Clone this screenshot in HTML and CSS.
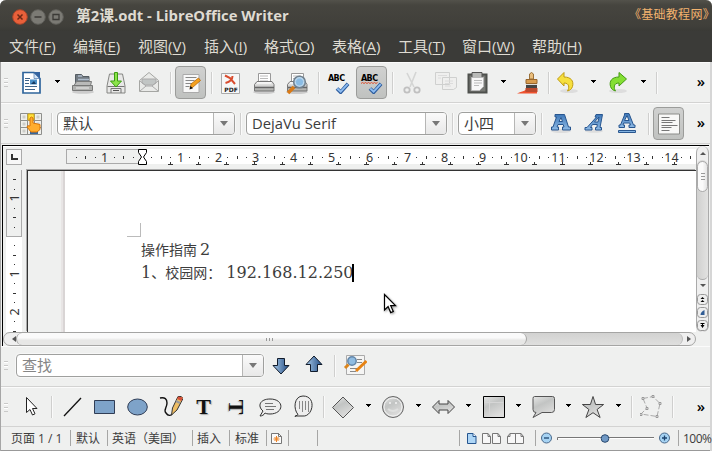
FILE: index.html
```html
<!DOCTYPE html>
<html lang="zh-CN">
<head>
<meta charset="utf-8">
<title>第2课.odt - LibreOffice Writer</title>
<link rel="stylesheet" href="styles.css">
</head>
<body>
<svg class="defs" width="0" height="0">
  <defs>
    <linearGradient id="gGrey" x1="0" y1="0" x2="0" y2="1"><stop offset="0" stop-color="#f4f4f4"/><stop offset="1" stop-color="#a8a9a6"/></linearGradient>
    <linearGradient id="gShape" x1="0" y1="0" x2=".5" y2="1"><stop offset="0" stop-color="#e6e7e6"/><stop offset=".45" stop-color="#c2c4c3"/><stop offset="1" stop-color="#dededd"/></linearGradient>
    <linearGradient id="gBlue" x1="0" y1="0" x2="1" y2="0"><stop offset="0" stop-color="#a9cbea"/><stop offset="1" stop-color="#214b83"/></linearGradient>
    <linearGradient id="gLetter" x1="0" y1="0" x2="0" y2="1"><stop offset="0" stop-color="#3e78b8"/><stop offset="1" stop-color="#8fbbe6"/></linearGradient>
    <symbol id="caret" viewBox="0 0 7 4"><path d="M1 0h5v1h-1v1h-1v1h-1v-1h-1v-1h-1z" fill="#000"/></symbol>
    <symbol id="cursor" viewBox="0 0 14 22"><path d="M1.500 1.500v15.500l3.600-3.400 2.600 6 2.600-1.100-2.600-5.800h4.800z" fill="#fff" stroke="#000" stroke-width="1.200"/></symbol>
    <symbol id="printer" viewBox="0 0 24 24"><ellipse cx="12" cy="21" rx="11" ry="2" fill="#ccc"/><path d="M6.500 12V2.500h12V12z" fill="#fff" stroke="#999"/><path d="M8 5h8M8 7.500h8M8 10h8" stroke="#bbb"/><path d="M5 10.500h15l2 3v6.500H2.500v-6.500z" fill="url(#gGrey)" stroke="#777"/><path d="M5 12h14" stroke="#fff"/><path d="M3 16.500h19" stroke="#666" stroke-width="1.500"/></symbol>
    <symbol id="check" viewBox="0 0 16 13"><path d="M2 7l4 4 8-9" fill="none" stroke="#2c5c9e" stroke-width="4"/><path d="M2.300 7l3.700 3.500 7.600-8.300" fill="none" stroke="#8ebcf0" stroke-width="2"/></symbol>
  </defs>
</svg>

<div class="window">
  <header class="titlebar">
    <div class="controls">
      <svg width="16" height="16" viewBox="0 0 16 16"><circle cx="8" cy="8" r="7.300" fill="#e9603a" stroke="#a6452b"/><path d="M5.500 5.500l5 5m0-5l-5 5" stroke="#6b2815" stroke-width="1.500"/></svg>
      <svg width="16" height="16" viewBox="0 0 16 16"><circle cx="8" cy="8" r="7.300" fill="#7b7a74" stroke="#5f5e59"/><path d="M4.500 8h7" stroke="#3b3a36" stroke-width="1.600"/></svg>
      <svg width="16" height="16" viewBox="0 0 16 16"><circle cx="8" cy="8" r="7.300" fill="#7b7a74" stroke="#5f5e59"/><path d="M5 5.500h6v5H5z" fill="none" stroke="#3b3a36" stroke-width="1.300"/></svg>
    </div>
    <h1 class="title">第2课.odt - LibreOffice Writer</h1>
    <span class="brand">《基础教程网》</span>
  </header>

  <nav class="menubar">
    <span class="m1">文件(<u>F</u>)</span><span class="m2">编辑(<u>E</u>)</span><span class="m3">视图(<u>V</u>)</span><span class="m4">插入(<u>I</u>)</span><span class="m5">格式(<u>O</u>)</span><span class="m6">表格(<u>A</u>)</span><span class="m7">工具(<u>T</u>)</span><span class="m8">窗口(<u>W</u>)</span><span class="m9">帮助(<u>H</u>)</span>
  </nav>

  <div class="toolbar">
    <i class="grip"></i>
    <span class="tool"><svg viewBox="0 0 24 24"><path d="M4 1.500h11l6 6V22H4z" fill="#fff" stroke="#2f659c" stroke-width="1.700"/><path d="M15 1l6 6.500V1z" fill="#3564a0"/><path d="M15 2v5.500h5.500z" fill="#d5e5f5" stroke="#3564a0" stroke-width=".6"/><path d="M6 7.500h5M6 9.500h4M6 12.500h4M6 15.500h12M6 18.500h10" stroke="#3e648a"/><path d="M11 8.500h7v5h-7z" fill="#4a90c8"/><path d="M12 13l3-3 2 3z" fill="#173b62"/></svg></span>
    <span class="drop wide"><svg><use href="#caret"/></svg></span>
    <span class="tool"><svg viewBox="1 0 24 24"><ellipse cx="12" cy="21" rx="11" ry="1.800" fill="#ccc"/><path d="M4.500 14V3.500h6l1.500 2h6V14z" fill="#727b83" stroke="#555d63"/><path d="M7 5h4M7 8.500h11" stroke="#aebccb" stroke-width="1.500"/><path d="M5.500 10.500h15l-1 4H3z" fill="#b9bab9" stroke="#7b7c7b"/><path d="M1.500 14.500h20v5h-20z" fill="#b0b1af" stroke="#777877"/><path d="M5 17h13" stroke="#eee"/></svg></span>
    <span class="tool"><svg viewBox="1 0 24 24"><path d="M5.500 3h13l2.500 12v7H3v-7z" fill="#e8e8e7" stroke="#858683"/><path d="M3.500 15.500h17M7 22v-4.500h10V22" fill="none" stroke="#777"/><path d="M9 19.500h6" stroke="#555"/><path d="M10.500 1.500h3V10h4L12 16 6.500 10h4z" fill="#8be34a" stroke="#3c9c12"/></svg></span>
    <span class="tool"><svg viewBox="1 0 24 24"><path d="M2.500 9.500L12 1.500l9.500 8v11h-19z" fill="#e9eae8" stroke="#a5a6a3"/><path d="M5 8h14v4l-3.500 2h-7L5 12z" fill="#c1c5c4" stroke="#aaa"/><path d="M3 10l6 5h6l6-5M3 20l6-5m6 0l6 5" fill="none" stroke="#aaa"/></svg></span>
    <i class="sep"></i>
    <span class="tool"><b class="pressed"><svg viewBox="0 0 24 24"><path d="M4 3.500h16v18H4z" fill="#f8f8f8" stroke="#aaa"/><path d="M6.500 6.500h11M6.500 9.500h9M6.500 12.500h7M6.500 15.500h4" stroke="#888"/><path d="M11 17.500l1-4.500 7.500-6 2 2.500-8 7z" fill="#f5a11e" stroke="#b66a0a" stroke-width=".8"/><path d="M10.500 18.500l1-3.500 2.500 2.300z" fill="#111"/></svg></b></span>
    <i class="sep"></i>
    <span class="tool"><svg viewBox="1 0 24 24"><path d="M2.500 2.500h18v20h-18z" fill="#f7f7f7" stroke="#aaa"/><path d="M6 4.500l5 2.500 5 6M13.500 5c0 4-3 6-7 7" fill="none" stroke="#d94d2f" stroke-width="2"/><text x="12" y="21" class="pdf">PDF</text></svg></span>
    <span class="tool"><svg viewBox="1 0 24 24"><use href="#printer" width="24" height="24"/></svg></span>
    <span class="tool"><svg viewBox="1 0 24 24"><use href="#printer" width="24" height="24"/><path d="M9 16l-6 6" stroke="#d97a16" stroke-width="3.500"/><circle cx="14.500" cy="11" r="5.800" fill="#b6d7f0" fill-opacity=".92" stroke="#71818e" stroke-width="1.600"/><circle cx="14.500" cy="11" r="3.500" fill="#8abce4"/></svg></span>
    <i class="sep"></i>
    <span class="tool"><svg viewBox="0 0 24 24"><text x="1" y="10" class="abc" textLength="17">ABC</text><use href="#check" x="8" y="11" width="15" height="12"/></svg></span>
    <span class="tool"><b class="pressed"><svg viewBox="0 0 24 24"><text x="1" y="10" class="abc" textLength="17">ABC</text><path d="M1 12.500l1.500-1 1.500 1 1.500-1 1.500 1 1.500-1 1.500 1 1.500-1 1.500 1 1.500-1 1.500 1 1.500-1" fill="none" stroke="#e05030"/><use href="#check" x="8" y="11" width="15" height="12"/></svg></b></span>
    <i class="sep"></i>
    <span class="tool"><svg viewBox="1 0 24 24"><path d="M7 2l7 14M16 1l-6 15" stroke="#d4d5d4" stroke-width="1.600" fill="none"/><circle cx="7" cy="19" r="2.700" fill="none" stroke="#c0c0c0" stroke-width="1.800"/><circle cx="17" cy="19" r="2.700" fill="none" stroke="#c0c0c0" stroke-width="1.800"/></svg></span>
    <span class="tool"><svg viewBox="0 0 24 24"><path d="M1.500 1.500h14v12h-14zM8.500 6.500h14v10l-3 2h-11z" fill="#efefee" stroke="#cfd0cf"/><path d="M4 4.500h9M4 7h3M11 10h8M11 12.500h8M11 15h6" stroke="#dcdcdc"/></svg></span>
    <span class="tool"><svg viewBox="1 0 24 24"><path d="M2.500 3.500h18v18h-18z" fill="#777975" stroke="#4e504d" stroke-width="2"/><path d="M6 1.500h10v5H6z" fill="#b9bab8" stroke="#555"/><path d="M5.500 6.500h12v9l-4 4h-8z" fill="#f8f8f8" stroke="#bbb"/><path d="M8 9.500h8M8 12h8M8 14.500h5" stroke="#bbb"/></svg></span>
    <span class="drop narrow"><svg><use href="#caret"/></svg></span>
    <span class="tool"><svg viewBox="0 0 24 24"><path d="M1 22.500c4-2 7-2 9-4h11v4z" fill="#f0522f"/><path d="M13.500 8V3q2-3 4 0v5z" fill="#e9bd7b" stroke="#9b713b"/><path d="M10 8.500h11v4H10z" fill="#d99d50" stroke="#98662c"/><path d="M10 13h11v4.500H10z" fill="#444"/><path d="M10 13.500h11" stroke="#ddd"/><path d="M9.500 17h12v4h-12z" fill="#bd4a2e"/></svg></span>
    <i class="sep"></i>
    <span class="tool"><svg viewBox="1 0 24 24"><ellipse cx="13" cy="20" rx="9" ry="2" fill="#ddd"/><path d="M1.500 8L8 1.500V6c7 0 10 4 8.500 9.500-.8 2.500-2.500 3.800-5 4.500 2-3 2-8-3.500-8v3z" fill="#f6df3e" stroke="#bf9b10"/></svg></span>
    <span class="drop"><svg><use href="#caret"/></svg></span>
    <span class="tool"><svg viewBox="1 0 24 24"><ellipse cx="12" cy="20" rx="9" ry="2" fill="#ddd"/><path d="M20.500 8L13 1.500V6C6 6 3 10 4.500 15.500c.8 2.500 2.500 3.800 5 4.500-2-3-2-8 3.500-8v3z" fill="#84df33" stroke="#439a12"/></svg></span>
    <span class="drop"><svg><use href="#caret"/></svg></span>
    <i class="sep"></i>
    <span class="more">»</span>
  </div>

  <div class="toolbar">
    <i class="grip"></i>
    <span class="tool"><svg viewBox="0 0 24 24"><path d="M1.500 1.500h21v21h-21zM8.500 1.500v21M15.500 1.500v21M1.500 8.500h21M1.500 15.500h21" fill="#efefeb" stroke="#8e8f8c"/><path d="M3.500 3.500h3v3h-3zM17.500 3.500h3v3h-3zM3.500 10.500h3v3h-3zM3.500 17.500h3v3h-3zM17.500 10.500h3v3h-3z" fill="#cdcec9"/><path d="M9 2h6v6H9z" fill="#ffe23c" stroke="#d9ae13"/><path d="M11 19h8v3h-8z" fill="#35669f"/><path d="M11 6q1.500-2 3 0v5l7 1.500v5l-3 2.500h-6l-4-5q0-2 3-1z" fill="#ffad2e" stroke="#d97505"/></svg></span>
    <i class="sep"></i>
    <div class="combo style-name"><span>默认</span><b><i></i></b></div>
    <i class="sep"></i>
    <div class="combo font-name"><span>DejaVu Serif</span><b><i></i></b></div>
    <i class="sep"></i>
    <div class="combo font-size"><span>小四</span><b><i></i></b></div>
    <i class="sep"></i>
    <span class="tool"><svg viewBox="1 1 24 24"><ellipse cx="12" cy="20" rx="10" ry="2" fill="#ddd"/><path fill-rule="evenodd" d="M8 3.500h7.500l4 12.500H21.500v3h-8v-3H15l-.8-2.500H9L8 16h1.500v3h-7v-3H4L7.500 6H6V3.500zM10 10.500h3.500L12 6.500z" fill="url(#gLetter)" stroke="#28568f"/></svg></span>
    <span class="tool"><svg viewBox="0 1 24 24"><ellipse cx="11" cy="20" rx="9" ry="1.800" fill="#ddd"/><path fill-rule="evenodd" d="M13 3.500h6.500L17 16.500h1.500V19h-6v-2.500h1.300l.5-3H9.500L7.500 16.500H9V19H2v-2.500h2L13.500 6H12zM11.500 11H15l1-5z" fill="url(#gLetter)" stroke="#28568f"/></svg></span>
    <span class="tool"><svg viewBox="1 0 24 24"><path fill-rule="evenodd" d="M9.500 1.500H14L18.500 13H20v2.500h-6V13h1.500l-.8-2H8.500L8 13h1.500v2.500H4V13h1.500L9.500 3zM9.500 8.500H14L12 3.500z" fill="url(#gLetter)" stroke="#28568f"/><path d="M3.500 18.500h17v2h-17z" fill="#83b3e1" stroke="#28568f"/></svg></span>
    <i class="sep"></i>
    <span class="tool"><b class="pressed"><svg viewBox="0 0 24 24"><path d="M1.500 2h21v20h-21z" fill="#f8f8f7" stroke="#8b8c89"/><path d="M4.500 5.500h8M4.500 8.500h14M4.500 10.500h11M4.500 13.500h16M4.500 15.500h10M4.500 18.500h8" stroke="#777"/></svg></b></span>
    <span class="more">»</span>
  </div>

  <main class="editor">
    <div class="workspace">
      <div class="ruler-row">
        <span class="tab-kind"><i></i></span>
        <svg class="hruler" id="hruler" width="630" height="18"></svg>
      </div>
      <div class="page-row">
        <svg class="vruler" id="vruler" width="16" height="162"></svg>
        <div class="canvas">
          <article class="page">
            <i class="crop"></i>
            <p><span class="han">操作指南</span> 2</p>
            <p>1<span class="han">、校园网：</span> 192.168.12.250<i class="text-caret"></i></p>
          </article>
        </div>
      </div>
      <div class="hscroll"><b class="left"></b><div class="track"><span class="thumb"><i></i></span></div><b class="right"></b></div>
    </div>
    <div class="vscroll">
      <b class="up"></b>
      <div class="track"><span class="thumb"><i></i></span></div>
      <b class="down"></b>
      <svg width="11" height="12" viewBox="0 0 11 12"><rect x=".5" y=".5" width="10" height="10" rx="3" class="nav"/><path d="M3.500 5l2-2 2 2zM3.500 8l2-2 2 2z"/></svg>
      <svg width="11" height="12" viewBox="0 0 11 12"><rect x=".5" y=".5" width="10" height="10" rx="3" class="nav"/><path d="M3.500 8q0-3 4-5v5z" fill="#315c94"/></svg>
      <svg width="11" height="12" viewBox="0 0 11 12"><rect x=".5" y=".5" width="10" height="10" rx="3" class="nav"/><path d="M3.500 3h4v1H6v1h1.500l-2 3-2-3H5V4H3.500z"/></svg>
    </div>
    <svg class="pointer" width="14" height="22"><use href="#cursor"/></svg>
  </main>

  <div class="toolbar find">
    <i class="grip"></i>
    <div class="combo search"><span>查找</span><b><i></i></b></div>
    <span class="tool"><svg viewBox="0 0 24 24"><path d="M8.500 4.500h7v7h4.500l-8 8.500-8-8.500h4.500z" fill="url(#gBlue)" stroke="#101b2b"/></svg></span>
    <span class="tool"><svg viewBox="0 1 24 24"><path d="M8.500 18.500h7v-7h4.500L12 3l-8 8.500h4.500z" fill="url(#gBlue)" stroke="#101b2b"/></svg></span>
    <i class="sep"></i>
    <span class="tool"><svg viewBox="0 1 24 24"><path d="M3.500 2.500h18v19h-18z" fill="#f5f5f4" stroke="#aaa"/><path d="M14 6.500h5M14 9.500h5M7 15.500h7M7 18.500h6" stroke="#888"/><circle cx="9" cy="8" r="4.200" fill="#8fbce2" stroke="#6386a8" stroke-width="1.500"/><path d="M5.500 11.500L2 15" stroke="#dc851b" stroke-width="3"/><path d="M13 18l10.500-10" stroke="#e68212" stroke-width="3"/></svg></span>
  </div>

  <div class="toolbar drawing">
    <i class="grip"></i>
    <span class="tool"><svg viewBox="1 1 24 24"><path d="M8.500 3.500v15l3.500-3 2.500 5.500 2.500-1.200-2.500-5.300h4.500z" fill="#fff" stroke="#222"/></svg></span>
    <i class="sep"></i>
    <span class="tool"><svg viewBox="0 0 24 24"><path d="M4 21L21 3" stroke="#111" stroke-width="1.300"/></svg></span>
    <span class="tool"><svg viewBox="1 0 24 24"><path d="M2.500 5.500h20v13h-20z" fill="#7ea3c9" stroke="#303d55"/></svg></span>
    <span class="tool"><svg viewBox="1 0 24 24"><ellipse cx="12.500" cy="12" rx="9.800" ry="8" fill="#7ea3c9" stroke="#303d55"/></svg></span>
    <span class="tool"><svg viewBox="0 0 24 24"><path d="M1 3c5-1 7 1 7 5 0 5-4 7-1 10 2 3 5 3 6 1" fill="none" stroke="#111" stroke-width="1.400"/><path d="M12.500 20l1-7L19 1.500q4-1 5 2L18 15z" fill="#eebe64" stroke="#333"/><path d="M18 4l4.500 2 1.300-3.500-4.600-1z" fill="#d5513a"/><path d="M17 6l4 2" stroke="#999" stroke-width="2"/></svg></span>
    <span class="tool glyph">T</span>
    <span class="tool glyph"><span class="turned">T</span></span>
    <span class="tool"><svg viewBox="0 0 24 24"><path d="M2 21l3-5C-1 11 2 4 12 4c15 0 14 15 0 15-3 0-4-.5-5-1-1 2-3 3-5 3z" fill="#eee" stroke="#333"/><path d="M7 8.500h8M7 11.500h11M8 14.500h8" stroke="#777"/></svg></span>
    <span class="tool"><svg viewBox="0 0 24 24"><path d="M4 21.500l3-2C2 14 3 1 12 1c14 0 10 21 0 20H4z" fill="#eee" stroke="#333"/><path d="M8.500 6v8M11.500 6v11M14.500 6v9M17.500 6v11" stroke="#888"/></svg></span>
    <i class="sep"></i>
    <span class="tool"><svg viewBox="1 0 24 24"><path d="M12 2l10.500 10.500L12 23 1.500 12.500z" fill="url(#gShape)" stroke="#555"/></svg></span>
    <span class="drop"><svg><use href="#caret"/></svg></span>
    <span class="tool"><svg viewBox="1 0 24 24"><circle cx="12" cy="12" r="10.500" fill="url(#gShape)" stroke="#666"/><circle cx="12" cy="12" r="9" fill="none" stroke="#f1f1f1"/><path d="M7 14q5 4 10 0" stroke="#dfe0df" stroke-width="2" fill="none"/><path d="M8 8h2M14 8h2" stroke="#e8e8e8" stroke-width="2"/></svg></span>
    <span class="drop"><svg><use href="#caret"/></svg></span>
    <span class="tool"><svg viewBox="1 0 24 24"><path d="M1.500 12L8 5.500V9h9V5.500l6.500 6.500-6.500 6.500V15H8v3.500z" fill="url(#gShape)" stroke="#444"/></svg></span>
    <span class="drop"><svg><use href="#caret"/></svg></span>
    <span class="tool"><svg viewBox="1 0 24 24"><path d="M2.500 1.500h21v21h-21z" fill="url(#gShape)" stroke="#000"/><path d="M3.500 7.500h19M8.500 2.500v19" stroke="#d6d6d6"/></svg></span>
    <span class="drop"><svg><use href="#caret"/></svg></span>
    <span class="tool"><svg viewBox="1 0 24 24"><path d="M3.500 1.500h18q2 0 2 2v11q0 3-3 3H11l-9 5 3-5q-3 0-3-3v-11q0-2 1.500-2z" fill="url(#gShape)" stroke="#555"/></svg></span>
    <span class="drop"><svg><use href="#caret"/></svg></span>
    <span class="tool"><svg viewBox="1 0 24 24"><path d="M12 1.500l2.600 8h8l-6.500 5 3 8L12 17.700l-7.100 4.800 3-8-6.500-5h8z" fill="url(#gShape)" stroke="#444"/></svg></span>
    <span class="drop"><svg><use href="#caret"/></svg></span>
    <i class="sep"></i>
    <span class="tool"><svg viewBox="1 0 24 24"><path d="M4 3.500L14 1.500l7 7-3 13-16-2.500 6-6z" fill="none" stroke="#aaa" stroke-dasharray="5 2"/><path d="M3 2.500h2v2H3zM13 .5h2v2h-2zM20 7.500h2v2h-2zM17 20.500h2v2h-2zM1 18.500h2v2H1zM7 12.500h2v2H7z" fill="#eee" stroke="#999"/></svg></span>
    <i class="sep"></i>
    <span class="more">»</span>
  </div>

  <footer class="status">
    <span class="s-page">页面 1 / 1</span>
    <span class="s-style">默认</span>
    <span class="s-lang">英语（美国）</span>
    <span class="s-mode">插入</span>
    <span class="s-sel">标准</span>
    <span class="s-mod"><svg width="11" height="13" viewBox="0 0 11 13"><path d="M.5 1.500h7l3 3v7H.5z" fill="#fafafa" stroke="#777"/><path d="M7.500 1v3.500h3" fill="none" stroke="#777"/><path d="M5.500 4v6M2.500 7h6M3.500 5l4 4m0-4l-4 4" stroke="#ef8424"/></svg></span>
    <span class="s-sign"></span>
    <span class="s-info"></span>
    <span class="s-view">
      <svg width="10" height="13" viewBox="0 0 10 13"><path d="M.5 1.500H6l3 3v7H.5z" fill="#aed6f6" stroke="#25558f"/><path d="M6 1.500v3h3" fill="#fff" stroke="#25558f"/></svg>
      <svg width="20" height="13" viewBox="0 0 20 13"><path d="M.5 1.500H6l2.500 3v7h-8zM10.500 1.500H16l2.500 3v7h-8z" fill="#f7f7f7" stroke="#777"/><path d="M6 1.500v3h2.500M16 1.500v3h2.500" fill="none" stroke="#777"/></svg>
      <svg width="18" height="13" viewBox="0 0 18 13"><path d="M.5 4.500l2.500-3h5.500v10h-8zM8.500 1.500H14l2.500 3v7h-8z" fill="#f7f7f7" stroke="#777"/><path d="M.5 4.500H3v-3M14 1.500v3h2.500" fill="none" stroke="#777"/></svg>
    </span>
    <span class="s-zoom">
      <svg width="131" height="14" viewBox="0 0 131 14"><path d="M17.500 9V6.500H114" fill="none" stroke="#777"/><path d="M18 7.500h96" stroke="#fff"/><circle cx="6.500" cy="7" r="5" fill="#a6d3f3" stroke="#49698c"/><path d="M4 7h5" stroke="#1d446f" stroke-width="1.300"/><circle cx="65" cy="7.500" r="3.800" fill="#7099c5" stroke="#29496f"/><circle cx="124.500" cy="7" r="5" fill="#a6d3f3" stroke="#49698c"/><path d="M122 7h5m-2.500-2.500v5" stroke="#1d446f" stroke-width="1.300"/></svg>
    </span>
    <span class="s-pct">100%</span>
  </footer>
</div>
<script src="script.js"></script>
</body>
</html>
```

FILE: styles.css
```css
* { box-sizing: border-box; }
body { margin: 0; background: #fff; font-family: "Open Sans", "Noto Sans CJK SC", sans-serif; color: #3c3c3c; }
i { font-style: normal; }
.defs { display: block; position: absolute; }
.window { width: 712px; height: 451px; overflow: hidden; display: flex; flex-direction: column; background: #eff0ef; border-radius: 6px 6px 0 0; box-shadow: inset 1px 0 #a6a6a6, inset -2px 0 #d6d6d6, inset 0 -1px #999; }

.titlebar { height: 31px; flex: none; display: flex; align-items: center; background: linear-gradient(#53524b 0, #46453f 5px, #403f3a 26px, #3a3a36 100%); }
.controls { display: flex; gap: 2px; margin: 2px 0 0 12px; }
.controls svg { display: block; }
.title { margin: 0 0 1px 12px; font-size: 14.800px; line-height: 20px; font-weight: 700; color: #dfdbd2; white-space: nowrap; }
.brand { margin: 0 3px 1px auto; font-size: 12px; font-feature-settings: "halt"; letter-spacing: .3px; line-height: 20px; white-space: nowrap; color: #f3b36e; }

.menubar { height: 31px; flex: none; display: flex; padding-left: 9px; background: #3b3b38; color: #dfdbd2; font-size: 15px; line-height: 31px; white-space: nowrap; }
.menubar u { text-underline-offset: 2px; text-decoration-thickness: 1px; }
.m1 { width: 64px; }
.m2 { width: 65px; }
.m3 { width: 66px; }
.m4 { width: 60px; }
.m5 { width: 68px; }
.m6 { width: 66px; }
.m7 { width: 64px; }
.m8 { width: 70px; }

.toolbar { height: 41px; flex: none; display: flex; align-items: center; margin: 0 2px 0 1px; border-top: 1px solid #fbfbfb; border-bottom: 1px solid #d3d3d2; }
.grip { width: 13px; height: 9px; padding-left: 3px; }
.grip::before { content: ""; display: block; width: 4px; height: 9px; background: repeating-linear-gradient(#c9c9c8 0 1px, #fff 1px 2px, transparent 2px 4px); }
.tool { width: 33px; flex: none; display: flex; align-items: center; justify-content: center; }
.tool svg { width: 24px; height: 24px; display: block; flex: none; }
.pressed { width: 31px; height: 33px; display: flex; align-items: center; justify-content: center; border: 1px solid #9b9c9a; border-radius: 4px; background: linear-gradient(#d0d1d0, #c0c2c0); }
.drop { width: 17px; flex: none; display: flex; justify-content: center; padding-bottom: 2px; }
.drop svg { width: 7px; height: 4px; display: block; }
.drop.wide { width: 20px; }
.drop.narrow { width: 16px; }
.sep { width: 8px; height: 22px; flex: none; padding-left: 4px; }
.sep::before { content: ""; display: block; width: 2px; height: 22px; background: linear-gradient(90deg, #cfcfce 50%, #fafafa 50%); }
.more { margin: 0 5px 3px auto; font-size: 15px; line-height: 20px; color: #000; font-weight: 600; }
.abc { font: 700 8px "DejaVu Sans", sans-serif; fill: #000; }
.pdf { font: 700 6px "DejaVu Sans", sans-serif; fill: #222; text-anchor: middle; }
.glyph { color: #111; font: 700 22px/24px "Liberation Serif", serif; text-shadow: 1px 1px 1px #aaa; }
.turned { transform: rotate(90deg); }

.combo { height: 23px; flex: none; margin: 0 1px 0 2px; display: flex; border: 1px solid #9fa09e; border-radius: 4px; background: #fff; box-shadow: 0 0 0 1px #f7f7f7; overflow: hidden; }
.combo span { flex: 1; padding-left: 5px; font-size: 15px; line-height: 21px; white-space: nowrap; }
.combo b { width: 21px; display: flex; align-items: center; justify-content: center; border-left: 1px solid #b6b6b5; background: linear-gradient(#fafafa, #e8e8e8); }
.combo b i { border: 4px solid transparent; border-top: 5px solid #777; border-bottom: 0; }
.style-name { width: 178px; }
.font-name { width: 201px; }
.font-name span { font-size: 14.800px; }
.font-size { width: 78px; }
.search { width: 248px; color: #858585; }

.editor { position: relative; height: 201px; flex: none; display: flex; margin: 1px 3px 0 2px; border: solid #000; border-width: 1px 0 0 1px; box-shadow: inset 0 1px #fff; }
.workspace { width: 693px; flex: none; display: flex; flex-direction: column; }
.ruler-row { height: 24px; flex: none; display: flex; padding: 3px 0 0 3px; }
.tab-kind { width: 16px; height: 16px; border: 1px solid #aaa; background: #f7f7f7; margin-right: 44px; padding: 4px 0 0 4px; }
.tab-kind i { display: block; width: 7px; height: 6px; border-left: 2px solid #333; border-bottom: 2px solid #333; }
.hruler, .vruler { display: block; flex: none; }
.page-row { height: 162px; flex: none; display: flex; padding-left: 3px; }
.canvas { flex: 1; margin-left: 5px; border: 1px solid #333; border-width: 1px 0 0 1px; box-shadow: -1px -1px #aaa; padding-left: 35px; background: #eff0ef; overflow: hidden; }
.page { height: 161px; border-left: 2px solid #d9d5d5; box-shadow: -2px 0 #e8e5e5; background: #fff; padding: 52px 0 0 76px; font: 16px/22px "DejaVu Serif", "Noto Sans CJK SC", serif; color: #3d3d3d; white-space: nowrap; }
.page p { margin: 0; height: 23px; line-height: 23px; }
.page .han { font-family: "Noto Sans CJK SC", sans-serif; font-size: 14px; line-height: 20px; }
.page p:nth-of-type(1) { word-spacing: -2px; height: 22px; line-height: 21px; }
.crop { display: block; width: 14px; height: 14px; margin: 0 0 2px -14px; border: 1px solid #bbb; border-width: 0 1px 1px 0; }
.text-caret { display: inline-block; width: 2px; height: 18px; background: #000; vertical-align: -4px; margin-left: -2px; }
.pointer { position: absolute; left: 380px; top: 147px; filter: drop-shadow(1px 1px 1px #999); }
.tick { fill: #333; }
.num { font: 12.500px "Noto Sans", sans-serif; fill: #333; text-anchor: middle; }

.hscroll { height: 14px; flex: none; display: flex; border: 1px solid #a5a5a4; border-radius: 7px; background: #efefef; }
.hscroll .track { flex: 1; background: linear-gradient(#d2d2d1, #dfdfde); border-right: 1px solid #bbb; border-radius: 6px; }
.hscroll .thumb { display: flex; align-items: center; justify-content: center; width: 511px; height: 12px; border: 1px solid #a5a5a4; border-width: 0 1px; border-radius: 7px; background: linear-gradient(#fafafa 40%, #e7e7e6 60%); padding-right: 4px; }
.hscroll .thumb i { width: 8px; height: 3px; background: repeating-linear-gradient(90deg, #999 0 1px, transparent 1px 3px); }
.hscroll b { width: 12px; padding: 3px 0 0 4px; }
.hscroll b::before { content: ""; display: block; width: 4px; border: 3px solid transparent; }
.hscroll .left::before { border-right: 4px solid #555; border-left: 0; }
.hscroll .right::before { border-left: 4px solid #555; border-right: 0; }
.vscroll { width: 13px; flex: none; display: flex; flex-direction: column; align-items: center; background: #efefef; border: 1px solid #aaa; border-width: 0 1px; border-radius: 7px; height: 186px; }
.vscroll .track { width: 11px; height: 120px; flex: none; background: linear-gradient(90deg, #d0d0cf, #e2e2e1); border-bottom: 1px solid #aaa; border-radius: 6px; }
.vscroll .thumb { display: flex; align-items: center; justify-content: center; height: 31px; margin-top: 1px; border: 1px solid #aaa; border-radius: 6px; background: linear-gradient(90deg, #fafafa 50%, #e4e4e4); }
.vscroll .thumb i { width: 4px; height: 8px; background: repeating-linear-gradient(#999 0 1px, transparent 1px 3px); }
.vscroll b { flex: none; height: 14px; padding-top: 6px; }
.vscroll b.down { padding-top: 4px; }
.vscroll b::before { content: ""; display: block; border: 3px solid transparent; }
.vscroll .up::before { border-bottom: 3px solid #555; border-top: 0; }
.vscroll .down::before { border-top: 3px solid #555; border-bottom: 0; }
.vscroll svg { flex: none; display: block; margin-bottom: 1px; }
.nav { fill: #eee; stroke: #999; }

.find { height: 41px; padding-bottom: 2px; }
.find .search { margin: 0 0 0 2px; }
.drawing { height: 40px; }
.status { height: 24px; flex: none; display: flex; align-items: center; margin: 0 0 0 1px; padding-bottom: 2px; font-size: 12px; line-height: 17px; white-space: nowrap; }
.status span { height: 16px; flex: none; border-right: 1px solid #a6a6a5; display: flex; align-items: center; padding-left: 5px; }
.status svg { display: block; flex: none; }
.status .s-page { width: 70px; padding-left: 10px; }
.status .s-style { width: 37px; }
.status .s-lang { width: 85px; padding-left: 4px; }
.status .s-mode { width: 37px; padding-left: 4px; }
.status .s-sel { width: 37px; }
.status .s-mod { width: 22px; padding-left: 4px; }
.status .s-sign { width: 29px; }
.status .s-info { width: 142px; }
.status .s-view { width: 76px; padding-left: 7px; gap: 5px; }
.status .s-zoom { width: 143px; padding-left: 4px; }
.status .s-pct { border: 0; font-size: 12px; letter-spacing: -.5px; padding-left: 4px; }
```

FILE: script.js
```js
const NS = "http://www.w3.org/2000/svg";
const UNIT = 37.8;
const TAB = 28;

function add(parent, name, attrs, text) {
  const el = document.createElementNS(NS, name);
  for (const key in attrs) el.setAttribute(key, attrs[key]);
  if (text !== undefined) el.textContent = text;
  parent.appendChild(el);
}

// Horizontal ruler: grey margin, white text area, quarter marks and tab stops.
const h = document.getElementById("hruler");
const origin = 76;
add(h, "rect", { x: 0, y: 0, width: 630, height: 15, fill: "#fff" });
add(h, "rect", { x: 0.5, y: 0.5, width: 76, height: 14, fill: "#eff0ef", stroke: "#aaa" });
for (let q = -7; q <= 58; q++) {
  const x = Math.round(origin + q * UNIT / 4);
  if (q === 0 || x > 629) continue;
  if (q % 4 === 0) add(h, "text", { x: x + 0.5, y: 13, class: "num" }, Math.abs(q / 4));
  else if (q % 2 === 0) add(h, "rect", { x: x, y: 7, width: 1, height: 3, class: "tick" });
  else add(h, "rect", { x: x, y: 8, width: 1, height: 1, class: "tick" });
}
for (let x = origin + TAB; x < 625; x += TAB) {
  add(h, "rect", { x: x - 2, y: 15, width: 5, height: 1, class: "tick" });
  add(h, "rect", { x: x, y: 13, width: 1, height: 2, class: "tick" });
}
add(h, "path", { d: "M72.500 .500h8v3l-3 4.500 3 4.500v3h-8v-3l3-4.500-3-4.500z", fill: "#fff", stroke: "#000" });

// Vertical ruler: digits run bottom to top.
const v = document.getElementById("vruler");
const top0 = 66;
add(v, "rect", { x: 0, y: 0, width: 16, height: 162, fill: "#fff" });
add(v, "rect", { x: 0.5, y: -1, width: 15, height: 67.5, fill: "#eff0ef", stroke: "#aaa" });
for (let q = -6; q <= 10; q++) {
  const y = Math.round(top0 + q * UNIT / 4);
  if (q === 0) continue;
  if (q % 4 === 0) add(v, "text", { x: 0, y: 0, class: "num", transform: `translate(13 ${y}) rotate(-90)` }, Math.abs(q / 4));
  else if (q % 2 === 0) add(v, "rect", { x: 7, y: y, width: 3, height: 1, class: "tick" });
  else add(v, "rect", { x: 8, y: y, width: 1, height: 1, class: "tick" });
}
```
